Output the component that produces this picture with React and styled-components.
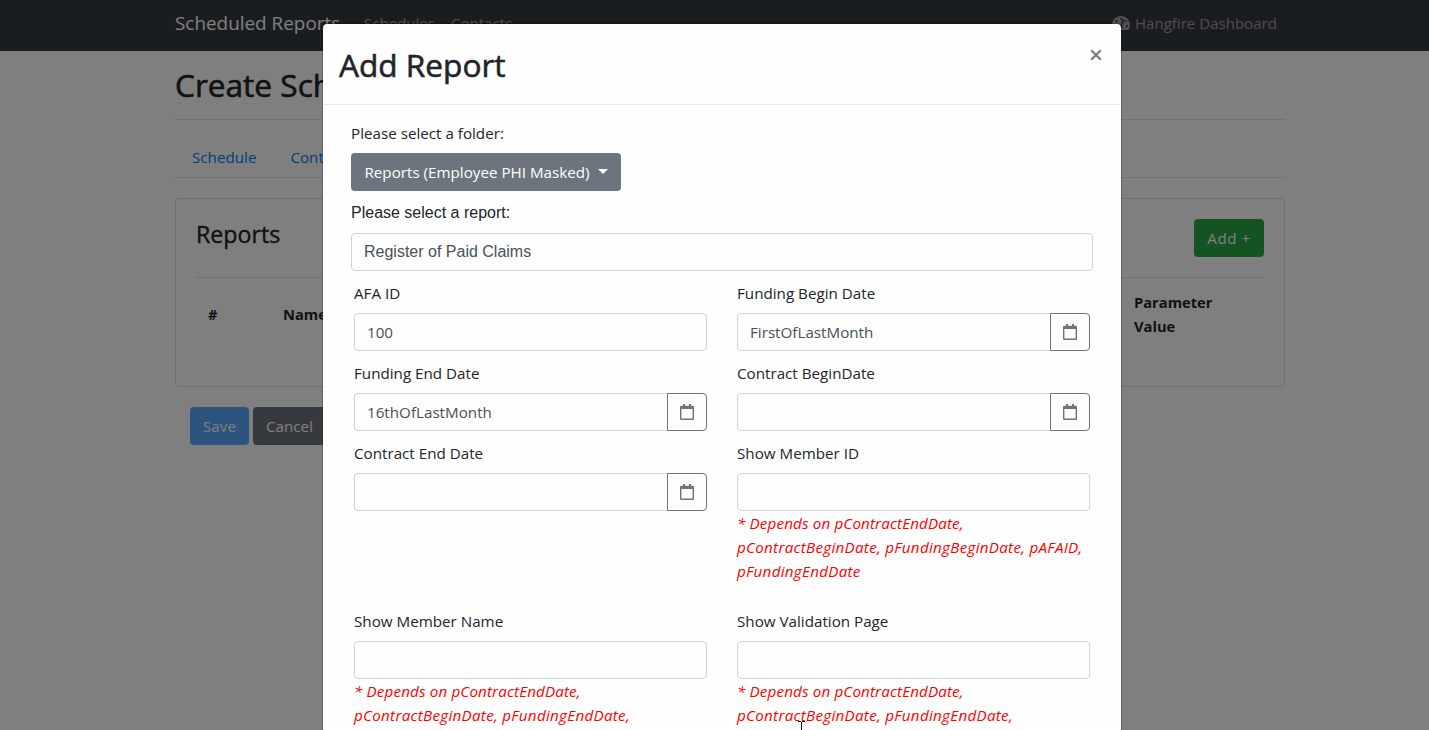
import React from 'react';
import styled, { createGlobalStyle, css } from 'styled-components';
import { FaTachometerAlt } from 'react-icons/fa';

const Global = createGlobalStyle`
  *, *::before, *::after { box-sizing: border-box; }
  body {
    margin: 0;
    overflow: hidden;
    background: #fff;
    color: #212529;
    font-family: "Open Sans", "Noto Sans", sans-serif;
    font-size: 15.2px;
    line-height: 24px;
  }
`;

const Page = styled.div`
  position: relative;
  height: 730px;
  overflow: hidden;
`;

const Navbar = styled.nav`
  display: flex;
  align-items: center;
  height: 51px;
  padding: 0 152px 6px 175px;
  background: #343a40;
`;

const Brand = styled.a`
  width: 165px;
  margin-right: 24px;
  color: #fff;
  font-size: 18.9px;
  line-height: 30px;
  white-space: nowrap;
`;

const NavLink = styled.a`
  display: flex;
  align-items: center;
  gap: 5px;
  width: ${(p) => p.$width}px;
  margin-left: ${(p) => (p.$end ? 'auto' : '0')};
  margin-right: ${(p) => (p.$end ? '0' : '15px')};
  color: rgba(255, 255, 255, 0.5);
  font-size: 15.05px;
  white-space: nowrap;
  svg { flex: none; }
`;

const Container = styled.main`
  width: 1110px;
  margin-left: 175px;
`;

const Title = styled.h2`
  margin: 0;
  font-size: 31.6px;
  font-weight: 400;
  line-height: 38px;
  -webkit-text-stroke: 0.6px currentColor;
`;

const PageTitle = styled(Title)`
  padding: 15px 0;
  border-bottom: 1px solid rgba(0, 0, 0, 0.1);
`;

const Tabs = styled.div`
  display: flex;
  gap: 34px;
  height: 58px;
  padding: 25px 17px 0;
  border-bottom: 1px solid #dee2e6;
  color: #007bff;
`;

const Card = styled.section`
  height: 189px;
  margin-top: 20px;
  padding: 20px;
  border: 1px solid rgba(0, 0, 0, 0.125);
  border-radius: 4px;
`;

const CardHeader = styled.header`
  display: flex;
  justify-content: space-between;
  height: 59px;
  border-bottom: 1px solid #dee2e6;
`;

const CardTitle = styled.h4`
  margin: 0;
  font-size: 23.2px;
  font-weight: 400;
  line-height: 31px;
  -webkit-text-stroke: 0.4px currentColor;
`;

const HeadRow = styled.div`
  display: grid;
  grid-template-columns: 75px 1fr 130px;
  align-items: center;
  height: 71px;
  padding-left: 12px;
  font-weight: 700;
  font-size: 14.7px;
`;

const tones = {
  success: '#28a745',
  primary: '#007bff',
  secondary: '#6c757d',
};

const Button = styled.button`
  display: inline-flex;
  align-items: center;
  justify-content: center;
  width: ${(p) => p.$width}px;
  height: 38px;
  padding: 0;
  border: 0;
  border-radius: 4px;
  background: ${(p) => tones[p.$tone]};
  opacity: ${(p) => (p.$faded ? 0.65 : 1)};
  color: #fff;
  font: inherit;
  letter-spacing: ${(p) => p.$track || 0}px;
  white-space: nowrap;
`;

const Actions = styled.div`
  display: flex;
  gap: 4px;
  padding: 20px 15px;
`;

const Backdrop = styled.div`
  position: absolute;
  inset: 0;
  background: rgba(0, 0, 0, 0.5);
`;

const Modal = styled.div`
  position: absolute;
  top: 23px;
  left: 322px;
  width: 800px;
  height: 760px;
  border: 1px solid rgba(0, 0, 0, 0.2);
  border-radius: 5px;
  background: #fefefe;
  background-clip: padding-box;
`;

const ModalHeader = styled.header`
  display: flex;
  justify-content: space-between;
  height: 81px;
  padding: 22px 19px 0 16px;
  border-bottom: 1px solid #e9ecef;
`;

const CloseIcon = styled.svg`
  margin-top: 3px;
`;

const ModalBody = styled.div`
  padding: 16px 28px;
`;

const Label = styled.label`
  display: block;
  margin-bottom: 8px;
  ${(p) => p.$plain && css`
    font-family: "Liberation Sans", Arial, sans-serif;
    font-size: 16px;
  `}
`;

const Toggle = styled(Button)`
  margin-bottom: 10px;
  gap: 8px;
`;

const Caret = styled.span`
  margin-top: -2px;
  border-top: 5px solid #fff;
  border-left: 5px solid transparent;
  border-right: 5px solid transparent;
`;

const Control = styled.div`
  flex: 1;
  height: 38px;
  padding: 6px 12px;
  border: 1px solid #ced4da;
  border-radius: ${(p) => (p.$joined ? '4px 0 0 4px' : '4px')};
  border-right-width: ${(p) => (p.$joined ? 0 : 1)}px;
  color: #495057;
  ${(p) => p.$plain && css`
    font-family: "Liberation Sans", Arial, sans-serif;
    font-size: 16px;
  `}
`;

const InputGroup = styled.div`
  display: flex;
`;

const DateButton = styled.button`
  display: flex;
  align-items: center;
  justify-content: center;
  width: 40px;
  height: 38px;
  padding: 0;
  border: 1px solid #6c757d;
  border-radius: 0 4px 4px 0;
  background: transparent;
`;

const Fields = styled.div`
  display: grid;
  grid-template-columns: 353px 353px;
  column-gap: 30px;
  padding: 10px 3px 0;
`;

const Field = styled.div`
  padding-bottom: ${(p) => (p.$hinted ? 26 : 10)}px;
`;

const Hint = styled.em`
  display: block;
  color: #f00;
  letter-spacing: 0.28px;
  white-space: pre;
  &::first-line { letter-spacing: 0.14px; }
`;

const Pointer = styled.svg`
  position: absolute;
  left: 797px;
  top: 721px;
`;

const CalendarIcon = () => (
  <svg width="14" height="16" viewBox="0 0 14 16">
    <path d="M3 0h2v2H3zM9 0h2v2H9z" fill="#6c757d" />
    <path fillRule="evenodd" fill="#6c757d" d="M1.2 1.8h11.6A1.2 1.2 0 0 1 14 3v11.8a1.2 1.2 0 0 1-1.2 1.2H1.2A1.2 1.2 0 0 1 0 14.8V3A1.2 1.2 0 0 1 1.2 1.8zM1.4 5v9.5h11.2V5z" />
  </svg>
);

const fields = [
  { label: 'AFA ID', value: '100' },
  { label: 'Funding Begin Date', value: 'FirstOfLastMonth', date: true },
  { label: 'Funding End Date', value: '16thOfLastMonth', date: true },
  { label: 'Contract BeginDate', date: true },
  { label: 'Contract End Date', date: true },
  { label: 'Show Member ID', hint: '* Depends on pContractEndDate,\npContractBeginDate, pFundingBeginDate, pAFAID,\npFundingEndDate' },
  { label: 'Show Member Name', hint: '* Depends on pContractEndDate,\npContractBeginDate, pFundingEndDate,' },
  { label: 'Show Validation Page', hint: '* Depends on pContractEndDate,\npContractBeginDate, pFundingEndDate,' },
];

export default function App() {
  return (
    <Page>
      <Global />
      <Navbar>
        <Brand>Scheduled Reports</Brand>
        <NavLink $width={72}>Schedules</NavLink>
        <NavLink $width={62}>Contacts</NavLink>
        <NavLink $end $width={165}><FaTachometerAlt size={18} />Hangfire Dashboard</NavLink>
      </Navbar>
      <Container>
        <PageTitle>Create Schedule</PageTitle>
        <Tabs><span>Schedule</span><span>Contacts</span></Tabs>
        <Card>
          <CardHeader>
            <CardTitle>Reports</CardTitle>
            <Button $tone="success" $width={70} $track={0.5}>Add +</Button>
          </CardHeader>
          <HeadRow><span>#</span><span>Name</span><span>Parameter<br />Value</span></HeadRow>
        </Card>
        <Actions>
          <Button $tone="primary" $faded $width={59}>Save</Button>
          <Button $tone="secondary" $width={73}>Cancel</Button>
        </Actions>
      </Container>
      <Backdrop />
      <Modal>
        <ModalHeader>
          <Title>Add Report</Title>
          <CloseIcon width="12" height="12" viewBox="0 0 12 12"><path d="M1.2 1.2l9.6 9.6M10.8 1.2l-9.6 9.6" stroke="#7f7f7f" strokeWidth="2.3" /></CloseIcon>
        </ModalHeader>
        <ModalBody>
          <Label>Please select a folder:</Label>
          <Toggle $tone="secondary" $width={270}>Reports (Employee PHI Masked)<Caret /></Toggle>
          <Label $plain>Please select a report:</Label>
          <Control $plain>Register of Paid Claims</Control>
          <Fields>
            {fields.map((f) => (
              <Field key={f.label} $hinted={!!f.hint}>
                <Label>{f.label}</Label>
                <InputGroup>
                  <Control $joined={f.date}>{f.value}</Control>
                  {f.date && <DateButton><CalendarIcon /></DateButton>}
                </InputGroup>
                {f.hint && <Hint>{f.hint}</Hint>}
              </Field>
            ))}
          </Fields>
        </ModalBody>
      </Modal>
      <Pointer width="9" height="9" viewBox="0 0 9 9"><path d="M1 .5h3M5 .5h3M4.5 1v8" stroke="#000" /></Pointer>
    </Page>
  );
}
